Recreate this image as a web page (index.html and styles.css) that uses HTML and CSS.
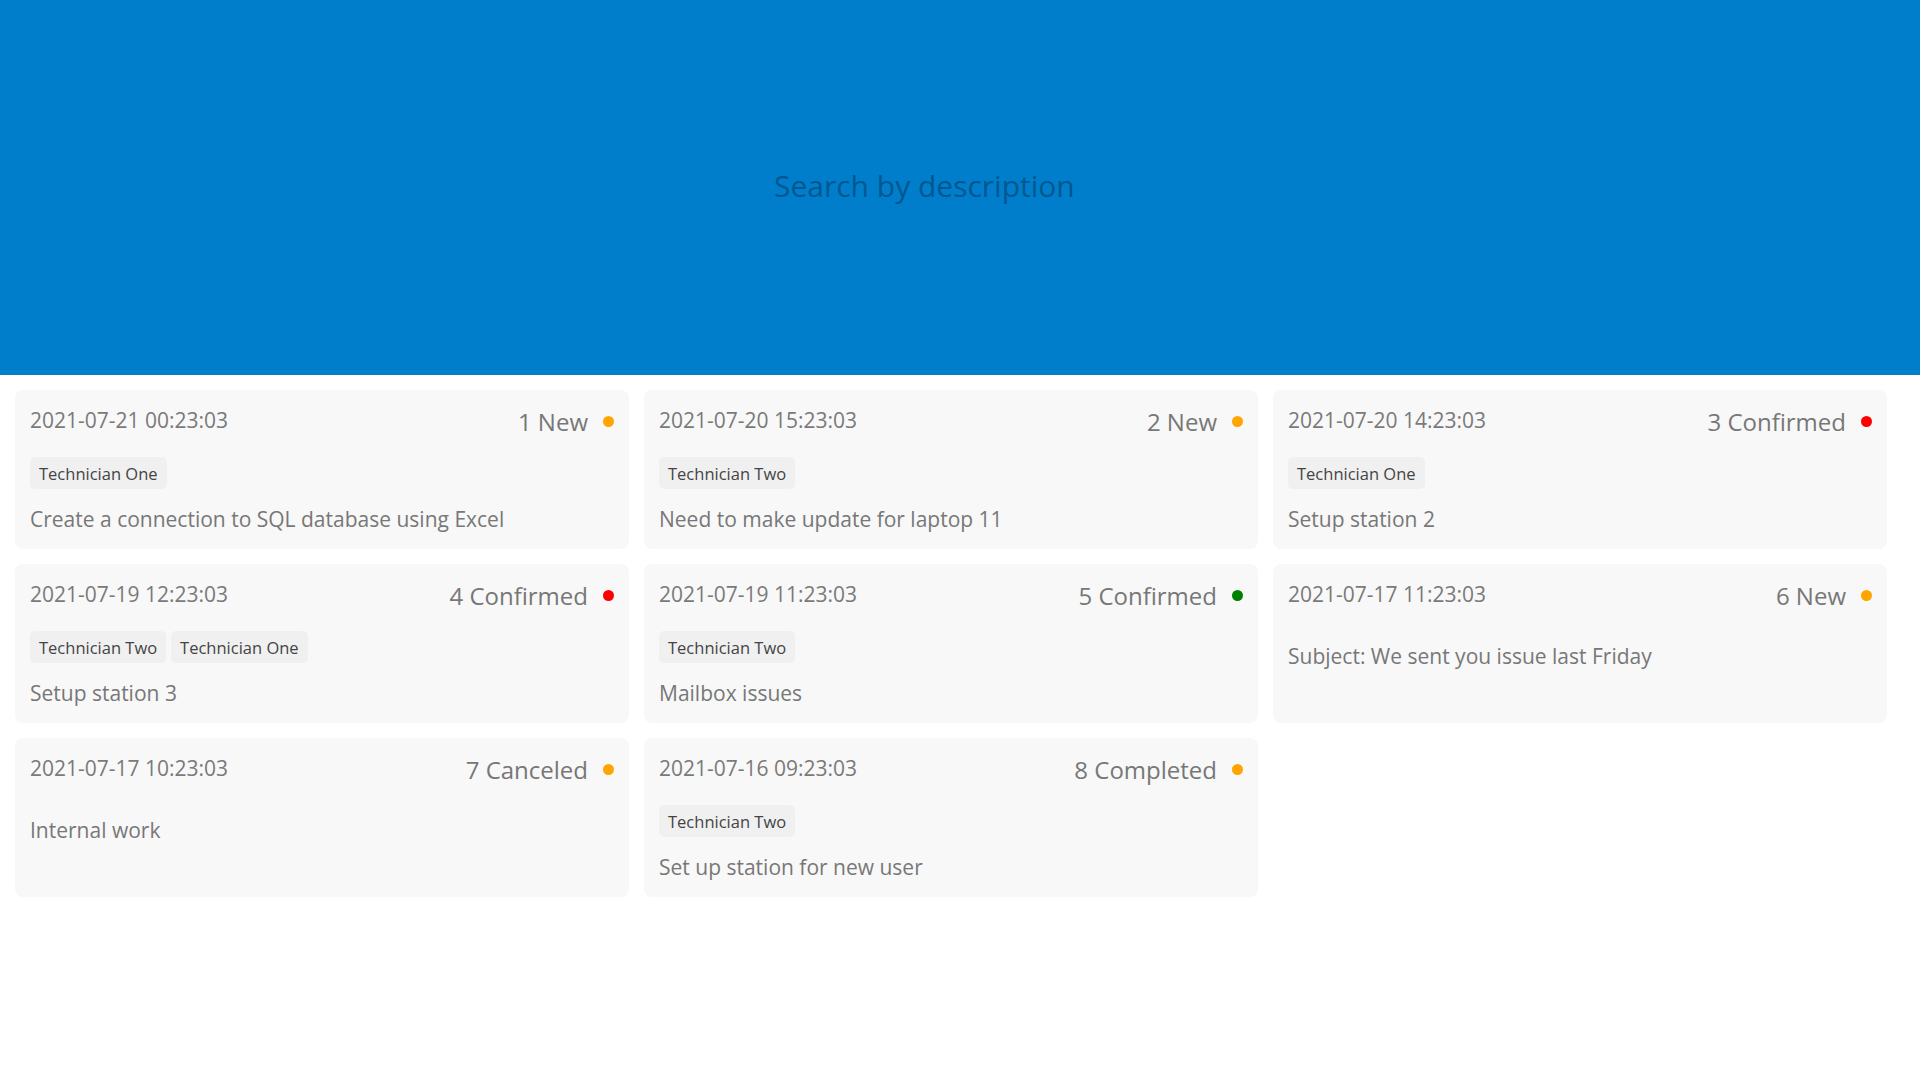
FILE: index.html
```html
<!DOCTYPE html>
<html lang="en">
<head>
<meta charset="utf-8">
<title>Issues</title>
<link rel="stylesheet" href="styles.css">
</head>
<body>
<header class="search-bar">
  <input class="search-input" type="text" placeholder="Search by description">
</header>
<main class="issue-grid">
  <article class="issue-card">
    <div class="issue-head"><span class="issue-date">2021-07-21 00:23:03</span><span class="issue-status">1 New<i class="dot dot-orange"></i></span></div>
    <div class="issue-tags"><span class="tag">Technician One</span></div>
    <p class="issue-desc">Create a connection to SQL database using Excel</p>
  </article>
  <article class="issue-card">
    <div class="issue-head"><span class="issue-date">2021-07-20 15:23:03</span><span class="issue-status">2 New<i class="dot dot-orange"></i></span></div>
    <div class="issue-tags"><span class="tag">Technician Two</span></div>
    <p class="issue-desc">Need to make update for laptop 11</p>
  </article>
  <article class="issue-card">
    <div class="issue-head"><span class="issue-date">2021-07-20 14:23:03</span><span class="issue-status">3 Confirmed<i class="dot dot-red"></i></span></div>
    <div class="issue-tags"><span class="tag">Technician One</span></div>
    <p class="issue-desc">Setup station 2</p>
  </article>
  <article class="issue-card">
    <div class="issue-head"><span class="issue-date">2021-07-19 12:23:03</span><span class="issue-status">4 Confirmed<i class="dot dot-red"></i></span></div>
    <div class="issue-tags"><span class="tag">Technician Two</span><span class="tag">Technician One</span></div>
    <p class="issue-desc">Setup station 3</p>
  </article>
  <article class="issue-card">
    <div class="issue-head"><span class="issue-date">2021-07-19 11:23:03</span><span class="issue-status">5 Confirmed<i class="dot dot-green"></i></span></div>
    <div class="issue-tags"><span class="tag">Technician Two</span></div>
    <p class="issue-desc">Mailbox issues</p>
  </article>
  <article class="issue-card">
    <div class="issue-head"><span class="issue-date">2021-07-17 11:23:03</span><span class="issue-status">6 New<i class="dot dot-orange"></i></span></div>
    <div class="issue-tags"></div>
    <p class="issue-desc">Subject: We sent you issue last Friday</p>
  </article>
  <article class="issue-card">
    <div class="issue-head"><span class="issue-date">2021-07-17 10:23:03</span><span class="issue-status">7 Canceled<i class="dot dot-orange"></i></span></div>
    <div class="issue-tags"></div>
    <p class="issue-desc">Internal work</p>
  </article>
  <article class="issue-card">
    <div class="issue-head"><span class="issue-date">2021-07-16 09:23:03</span><span class="issue-status">8 Completed<i class="dot dot-orange"></i></span></div>
    <div class="issue-tags"><span class="tag">Technician Two</span></div>
    <p class="issue-desc">Set up station for new user</p>
  </article>
</main>
</body>
</html>
```
FILE: styles.css
```css
* { box-sizing: border-box; }
html, body { margin: 0; padding: 0; background: #ffffff; }
body { font-family: "Open Sans", "Noto Sans", sans-serif; color: #777777; }

.search-bar {
  height: 375px;
  background: #007ecc;
  display: flex;
  align-items: center;
  justify-content: center;
}
.search-input {
  width: 372px;
  margin-bottom: 4px;
  border: none;
  outline: none;
  background: transparent;
  padding: 0;
  font-family: "Open Sans", "Noto Sans", sans-serif;
  font-size: 30px;
  color: #00588f;
}
.search-input::placeholder { color: #00588f; opacity: 1; }

.issue-grid {
  display: grid;
  grid-template-columns: repeat(3, 614px);
  gap: 15px;
  padding: 15px 0 0 15px;
}
.issue-card {
  background: #f8f8f8;
  border-radius: 8px;
  padding: 15px;
  min-height: 159px;
}
.issue-head {
  display: flex;
  justify-content: space-between;
  align-items: flex-start;
}
.issue-date { padding-top: 1px; font-size: 21px; line-height: 28px; color: #7a7a7a; }
.issue-status {
  display: flex;
  align-items: center;
  gap: 15px;
  font-size: 24px;
  line-height: 33px;
  color: #777777;
}
.dot { display: block; width: 11px; height: 11px; border-radius: 50%; }
.dot-orange { background: #ffa500; }
.dot-red { background: #ff0000; }
.dot-green { background: #008000; }

.issue-tags { display: flex; flex-wrap: wrap; gap: 0 5px; margin-top: 19px; }
.tag {
  display: inline-flex;
  align-items: center;
  height: 32px;
  padding: 0 9px;
  margin-bottom: 5px;
  background: #f0f0f0;
  border-radius: 5px;
  font-size: 16.5px;
  color: #444444;
}
.issue-desc { margin: 10px 0 0 0; font-size: 21px; line-height: 30px; color: #777777; }
```
